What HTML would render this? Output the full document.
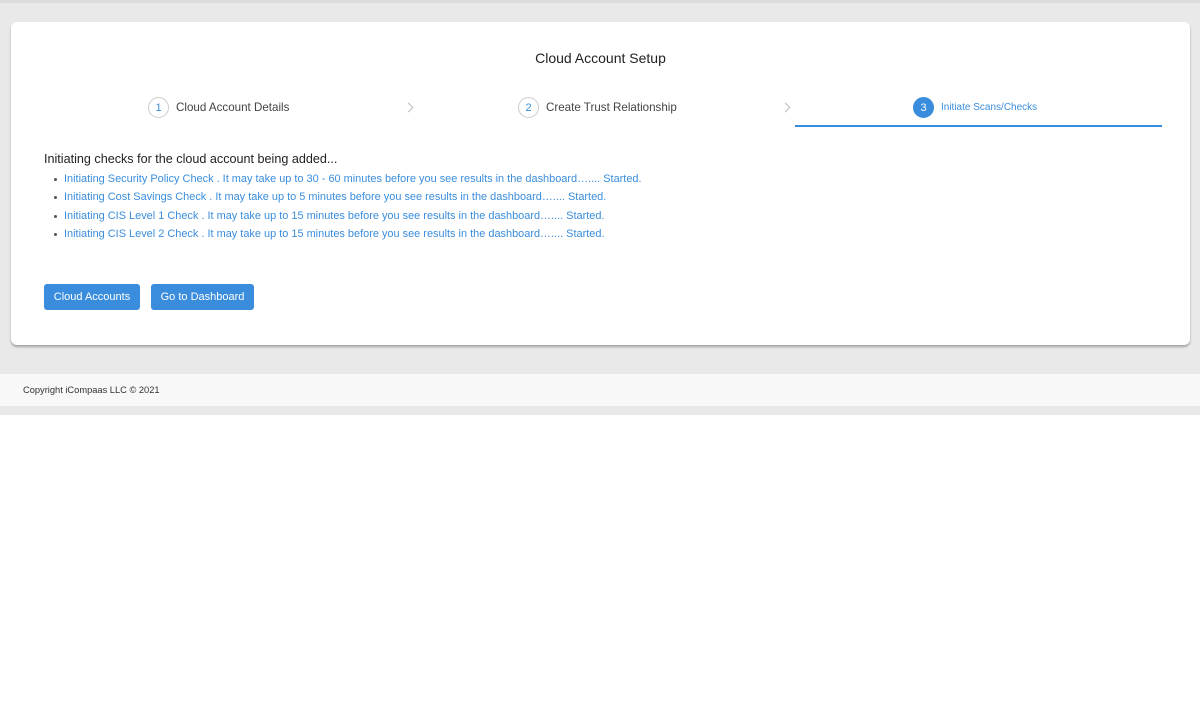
<!DOCTYPE html>
<html><head><meta charset="utf-8">
<style>
*{box-sizing:border-box;margin:0;padding:0}
html,body{width:1200px;height:709px;background:#fff;font-family:"Liberation Sans",sans-serif;overflow:hidden;position:relative}
.bg{position:absolute;left:0;top:0;width:1200px;height:415px;background:#e9e9e9}
.topline{position:absolute;left:0;top:0;width:1200px;height:3px;background:#dcdcdc}
.card{position:absolute;left:11px;top:22px;width:1179px;height:323px;background:#fff;border-radius:6px;box-shadow:0 2px 2px rgba(0,0,0,.3)}
.title{position:absolute;left:0;width:100%;top:28px;text-align:center;font-size:14px;color:#222}
.step{position:absolute;top:75px;display:flex;align-items:center;font-size:11.6px;color:#444}
.circ{width:21px;height:21px;border-radius:50%;border:1px solid #ccc;color:#3a8ddc;font-size:11px;display:flex;align-items:center;justify-content:center;margin-right:7px}
.act .circ{background:#3a8ddc;border-color:#3a8ddc;color:#fff}
.act{color:#3a8ddc;font-size:10px}
.chev{position:absolute;top:82px;width:7px;height:7px;border-top:1px solid #bbb;border-right:1px solid #bbb;transform:rotate(45deg)}
.uline{position:absolute;left:784px;top:103px;width:367px;height:2px;background:#3a8ddc}
.head{position:absolute;left:33px;top:130px;font-size:12.6px;color:#222}
ul{position:absolute;left:53px;top:150px;list-style:none}
li{font-size:10.95px;color:#3a8ddc;height:18.3px;line-height:14px;position:relative}
li:before{content:"";position:absolute;left:-10px;top:6px;width:3px;height:3px;border-radius:50%;background:#555}
.btn{position:absolute;top:262px;height:26px;background:#3a8ddc;color:#fff;font-size:11px;border-radius:3px;display:flex;align-items:center;justify-content:center}
.foot{position:absolute;left:0;top:374px;width:1200px;height:32px;background:#f8f8f8;font-size:9.3px;color:#333;padding:11px 0 0 23px}
</style></head><body>
<div class="bg"></div><div class="topline"></div>
<div class="card">
<div class="title">Cloud Account Setup</div>
<div class="step" style="left:137px"><div class="circ">1</div>Cloud Account Details</div>
<div class="chev" style="left:394px"></div>
<div class="step" style="left:507px"><div class="circ">2</div>Create Trust Relationship</div>
<div class="chev" style="left:771px"></div>
<div class="step act" style="left:902px"><div class="circ">3</div>Initiate Scans/Checks</div>
<div class="uline"></div>
<div class="head">Initiating checks for the cloud account being added...</div>
<ul>
<li>Initiating Security Policy Check . It may take up to 30 - 60 minutes before you see results in the dashboard….... Started.</li>
<li>Initiating Cost Savings Check . It may take up to 5 minutes before you see results in the dashboard….... Started.</li>
<li>Initiating CIS Level 1 Check . It may take up to 15 minutes before you see results in the dashboard….... Started.</li>
<li>Initiating CIS Level 2 Check . It may take up to 15 minutes before you see results in the dashboard….... Started.</li>
</ul>
<div class="btn" style="left:33px;width:96px">Cloud Accounts</div>
<div class="btn" style="left:140px;width:103px">Go to Dashboard</div>
</div>
<div class="foot">Copyright iCompaas LLC © 2021</div>
</body></html>
